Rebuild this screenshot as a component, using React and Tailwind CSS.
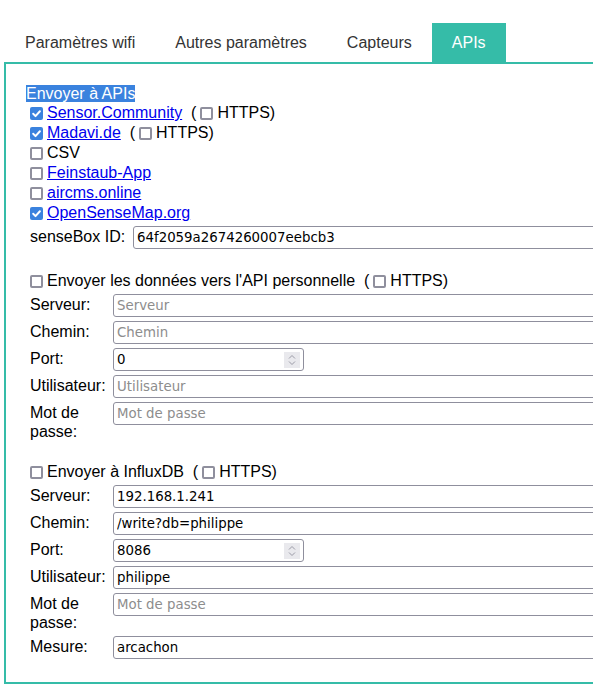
import React from "react";

const Box = ({ checked }) =>
  checked ? (
    <span className="ml-[4px] mr-[4px] inline-flex h-[13px] w-[13px] shrink-0 items-center justify-center rounded-[2px] bg-[#3a82de]">
      <svg viewBox="0 0 13 13" className="h-[13px] w-[13px]">
        <path d="M3.2 6.8l2.3 2.3L9.9 4.3" fill="none" stroke="white" strokeWidth="2" strokeLinecap="round" strokeLinejoin="round" />
      </svg>
    </span>
  ) : (
    <span className="ml-[4px] mr-[4px] inline-block h-[13px] w-[13px] shrink-0 rounded-[2px] border-2 border-[#8f8f9d] bg-white" />
  );

const Link = ({ children }) => <a className="cursor-pointer text-[#0000ee] underline">{children}</a>;

const Https = () => (
  <>
    <span className="whitespace-pre">{"\u00a0 ("}</span>
    <Box />
    <span>HTTPS)</span>
  </>
);

const Field = ({ value, placeholder }) => (
  <input
    readOnly
    defaultValue={value}
    placeholder={placeholder}
    className="block h-[23px] w-full rounded-[3px] border border-[#8f8f9d] bg-white px-[3px] font-['DejaVu_Sans',sans-serif] text-[13.33px] text-black outline-none placeholder:text-[#8d8d8d]"
  />
);

const Port = ({ value }) => (
  <div className="flex h-[23px] w-[191px] items-center rounded-[3px] border border-[#8f8f9d] bg-white pl-[3px] pr-[3px]">
    <span className="flex-1 font-['DejaVu_Sans',sans-serif] text-[13.33px] text-black">{value}</span>
    <span className="flex h-4 w-4 items-center justify-center bg-[#e9e9ed]">
      <svg viewBox="0 0 16 16" className="h-4 w-4">
        <path d="M5 6.5L8 3.5l3 3M5 9.5L8 12.5l3-3" fill="none" stroke="#9a9aa6" strokeWidth="1" />
      </svg>
    </span>
  </div>
);

const Label = ({ children }) => <div className="pt-[2px] leading-[18.5px] text-black">{children}</div>;

const Form = ({ rows }) => (
  <div className="ml-[4px] mt-[3px] grid grid-cols-[83px_1fr] gap-y-1">
    {rows.map((r) => (
      <React.Fragment key={r.label}>
        <Label>{r.label}</Label>
        <div className="min-w-0">{r.port ? <Port value={r.value} /> : <Field value={r.value} placeholder={r.placeholder} />}</div>
      </React.Fragment>
    ))}
  </div>
);

export default function App() {
  const tabs = ["Paramètres wifi", "Autres paramètres", "Capteurs", "APIs"];

  return (
    <div className="h-[696px] w-[593px] overflow-hidden bg-white font-['Liberation_Sans',Arial,sans-serif] text-base text-black">
      {/* Tabs */}
      <div className="flex pl-[5px] pt-[23px]">
        {tabs.map((t) => (
          <div
            key={t}
            className={
              t === "APIs"
                ? "flex h-[39px] items-center bg-[#35bca8] px-5 text-white"
                : "flex h-[39px] items-center px-5 text-[#333333]"
            }
          >
            {t}
          </div>
        ))}
      </div>

      {/* Panel */}
      <div className="ml-[4px] w-[720px] border-2 border-[#35bca8] pb-[23px] pl-[20px] pt-[21px]">
        <div className="h-[18px] leading-[18px]">
          <span className="bg-[#3a82de] text-white">Envoyer à APIs</span>
        </div>
        <div className="flex h-5 items-center">
          <Box checked />
          <Link>Sensor.Community</Link>
          <Https />
        </div>
        <div className="flex h-5 items-center">
          <Box checked />
          <Link>Madavi.de</Link>
          <Https />
        </div>
        <div className="flex h-5 items-center">
          <Box />
          <span>CSV</span>
        </div>
        <div className="flex h-5 items-center">
          <Box />
          <Link>Feinstaub-App</Link>
        </div>
        <div className="flex h-5 items-center">
          <Box />
          <Link>aircms.online</Link>
        </div>
        <div className="flex h-5 items-center">
          <Box checked />
          <Link>OpenSenseMap.org</Link>
        </div>
        <div className="ml-[4px] mt-[3px] flex">
          <div className="w-[103px] pt-[1px] leading-[19.5px]">senseBox ID:</div>
          <div className="flex-1">
            <Field value="64f2059a2674260007eebcb3" />
          </div>
        </div>

        {/* Personal API */}
        <div className="mt-[22px] flex h-5 items-center">
          <Box />
          <span>Envoyer les données vers l'API personnelle</span>
          <Https />
        </div>
        <Form
          rows={[
            { label: "Serveur:", placeholder: "Serveur" },
            { label: "Chemin:", placeholder: "Chemin" },
            { label: "Port:", port: true, value: "0" },
            { label: "Utilisateur:", placeholder: "Utilisateur" },
            { label: "Mot de passe:", placeholder: "Mot de passe" },
          ]}
        />

        {/* InfluxDB */}
        <div className="mt-[21px] flex h-5 items-center">
          <Box />
          <span>Envoyer à InfluxDB</span>
          <Https />
        </div>
        <Form
          rows={[
            { label: "Serveur:", value: "192.168.1.241" },
            { label: "Chemin:", value: "/write?db=philippe" },
            { label: "Port:", port: true, value: "8086" },
            { label: "Utilisateur:", value: "philippe" },
            { label: "Mot de passe:", placeholder: "Mot de passe" },
            { label: "Mesure:", value: "arcachon" },
          ]}
        />
      </div>
    </div>
  );
}
